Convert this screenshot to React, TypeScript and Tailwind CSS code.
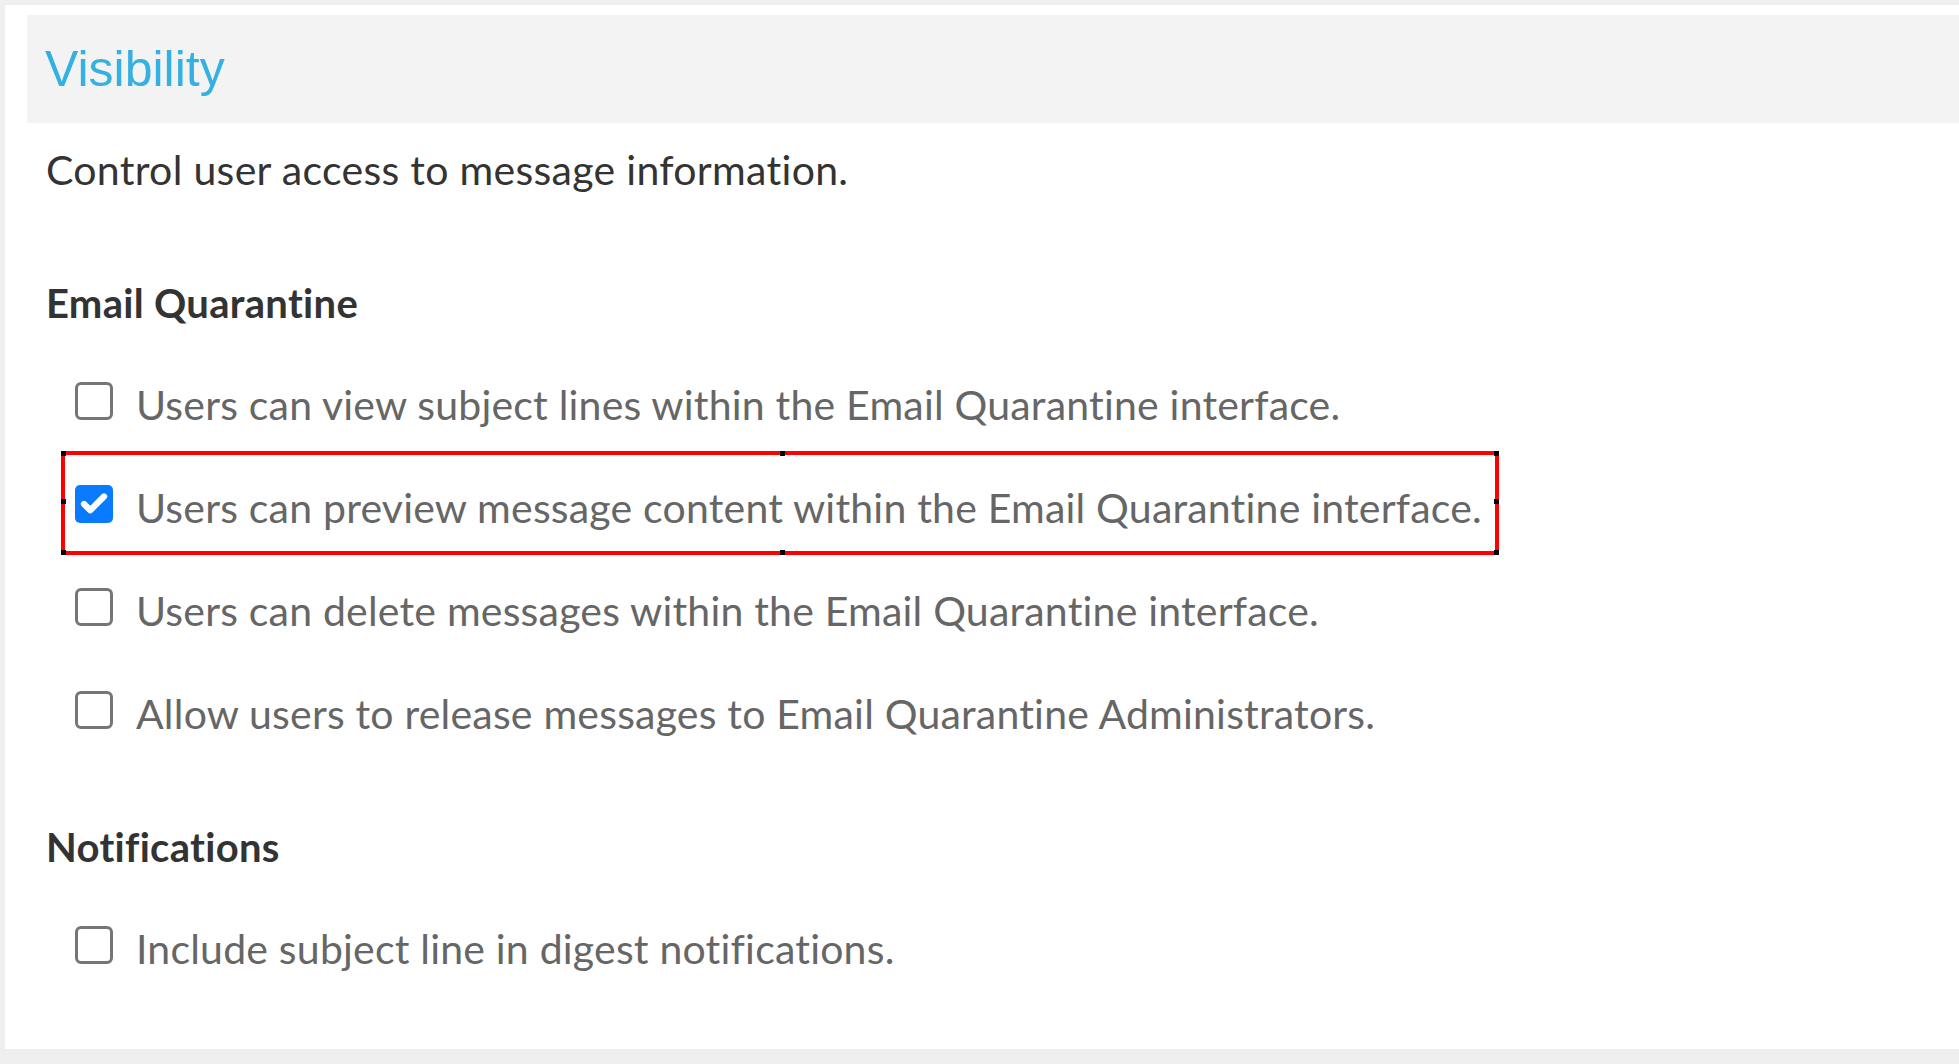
import { Check } from "lucide-react";

type Option = { label: string; checked?: boolean; highlight?: boolean };

const QUARANTINE: Option[] = [
  { label: "Users can view subject lines within the Email Quarantine interface." },
  {
    label: "Users can preview message content within the Email Quarantine interface.",
    checked: true,
    highlight: true,
  },
  { label: "Users can delete messages within the Email Quarantine interface." },
  { label: "Allow users to release messages to Email Quarantine Administrators." },
];

const NOTIFICATIONS: Option[] = [{ label: "Include subject line in digest notifications." }];

function Box({ checked }: { checked?: boolean }) {
  if (checked) {
    return (
      <span className="mt-[2px] flex h-[38px] w-[38px] shrink-0 items-center justify-center rounded-[5px] bg-[#0a7aff]">
        <Check size={30} strokeWidth={5} className="text-white" />
      </span>
    );
  }
  return (
    <span className="mt-[2px] h-[38px] w-[38px] shrink-0 rounded-[6px] border-[3px] border-[#767676] bg-white" />
  );
}

// little black squares the screenshot tool left on the highlight box
function Handle({ className }: { className: string }) {
  return <span className={`absolute h-[5px] w-[5px] bg-black ${className}`} />;
}

function Row({ opt }: { opt: Option }) {
  return (
    <label className="relative ml-[29px] flex h-[48px] items-start gap-[23px]">
      <Box checked={opt.checked} />
      <span className="mt-[1px] text-[41px] tracking-[0.2px] text-[#666]">{opt.label}</span>
      {opt.highlight && (
        <span className="pointer-events-none absolute left-[-14px] top-[-32px] h-[104px] w-[1438px] border-4 border-[#ff0000]">
          <Handle className="-left-[4px] -top-[4px]" />
          <Handle className="-left-[4px] top-[44px]" />
          <Handle className="-left-[4px] -bottom-[4px]" />
          <Handle className="left-[715px] -top-[4px]" />
          <Handle className="left-[715px] -bottom-[4px]" />
          <Handle className="-right-[4px] -top-[4px]" />
          <Handle className="-right-[4px] top-[44px]" />
          <Handle className="-right-[4px] -bottom-[4px]" />
        </span>
      )}
    </label>
  );
}

function Section({ title, options }: { title: string; options: Option[] }) {
  return (
    <section>
      <h3 className="mb-[53px] font-bold tracking-[0.3px] text-[#333]">{title}</h3>
      <div className="flex flex-col gap-[55px]">
        {options.map((o) => (
          <Row key={o.label} opt={o} />
        ))}
      </div>
    </section>
  );
}

export default function App() {
  return (
    <div className="min-h-screen bg-[#efefef] pb-[15px] pl-[5px] pt-[5px]">
      <div className="h-[1044px] bg-white pl-[22px] pt-[10px] font-['Lato',sans-serif] text-[40px] leading-[48px]">
        <div className="flex h-[108px] items-center bg-[#f3f3f3] pl-[18px]">
          <h2 className="font-['Liberation_Sans',Arial,sans-serif] text-[50px] leading-none text-[#35b0e2]">
            Visibility
          </h2>
        </div>
        <div className="pl-[19px]">
          <p className="mt-[23px] text-[41px] tracking-[0.3px] text-[#333]">
            Control user access to message information.
          </p>
          <div className="mt-[85px] flex flex-col gap-[86px]">
            <Section title="Email Quarantine" options={QUARANTINE} />
            <Section title="Notifications" options={NOTIFICATIONS} />
          </div>
        </div>
      </div>
    </div>
  );
}
